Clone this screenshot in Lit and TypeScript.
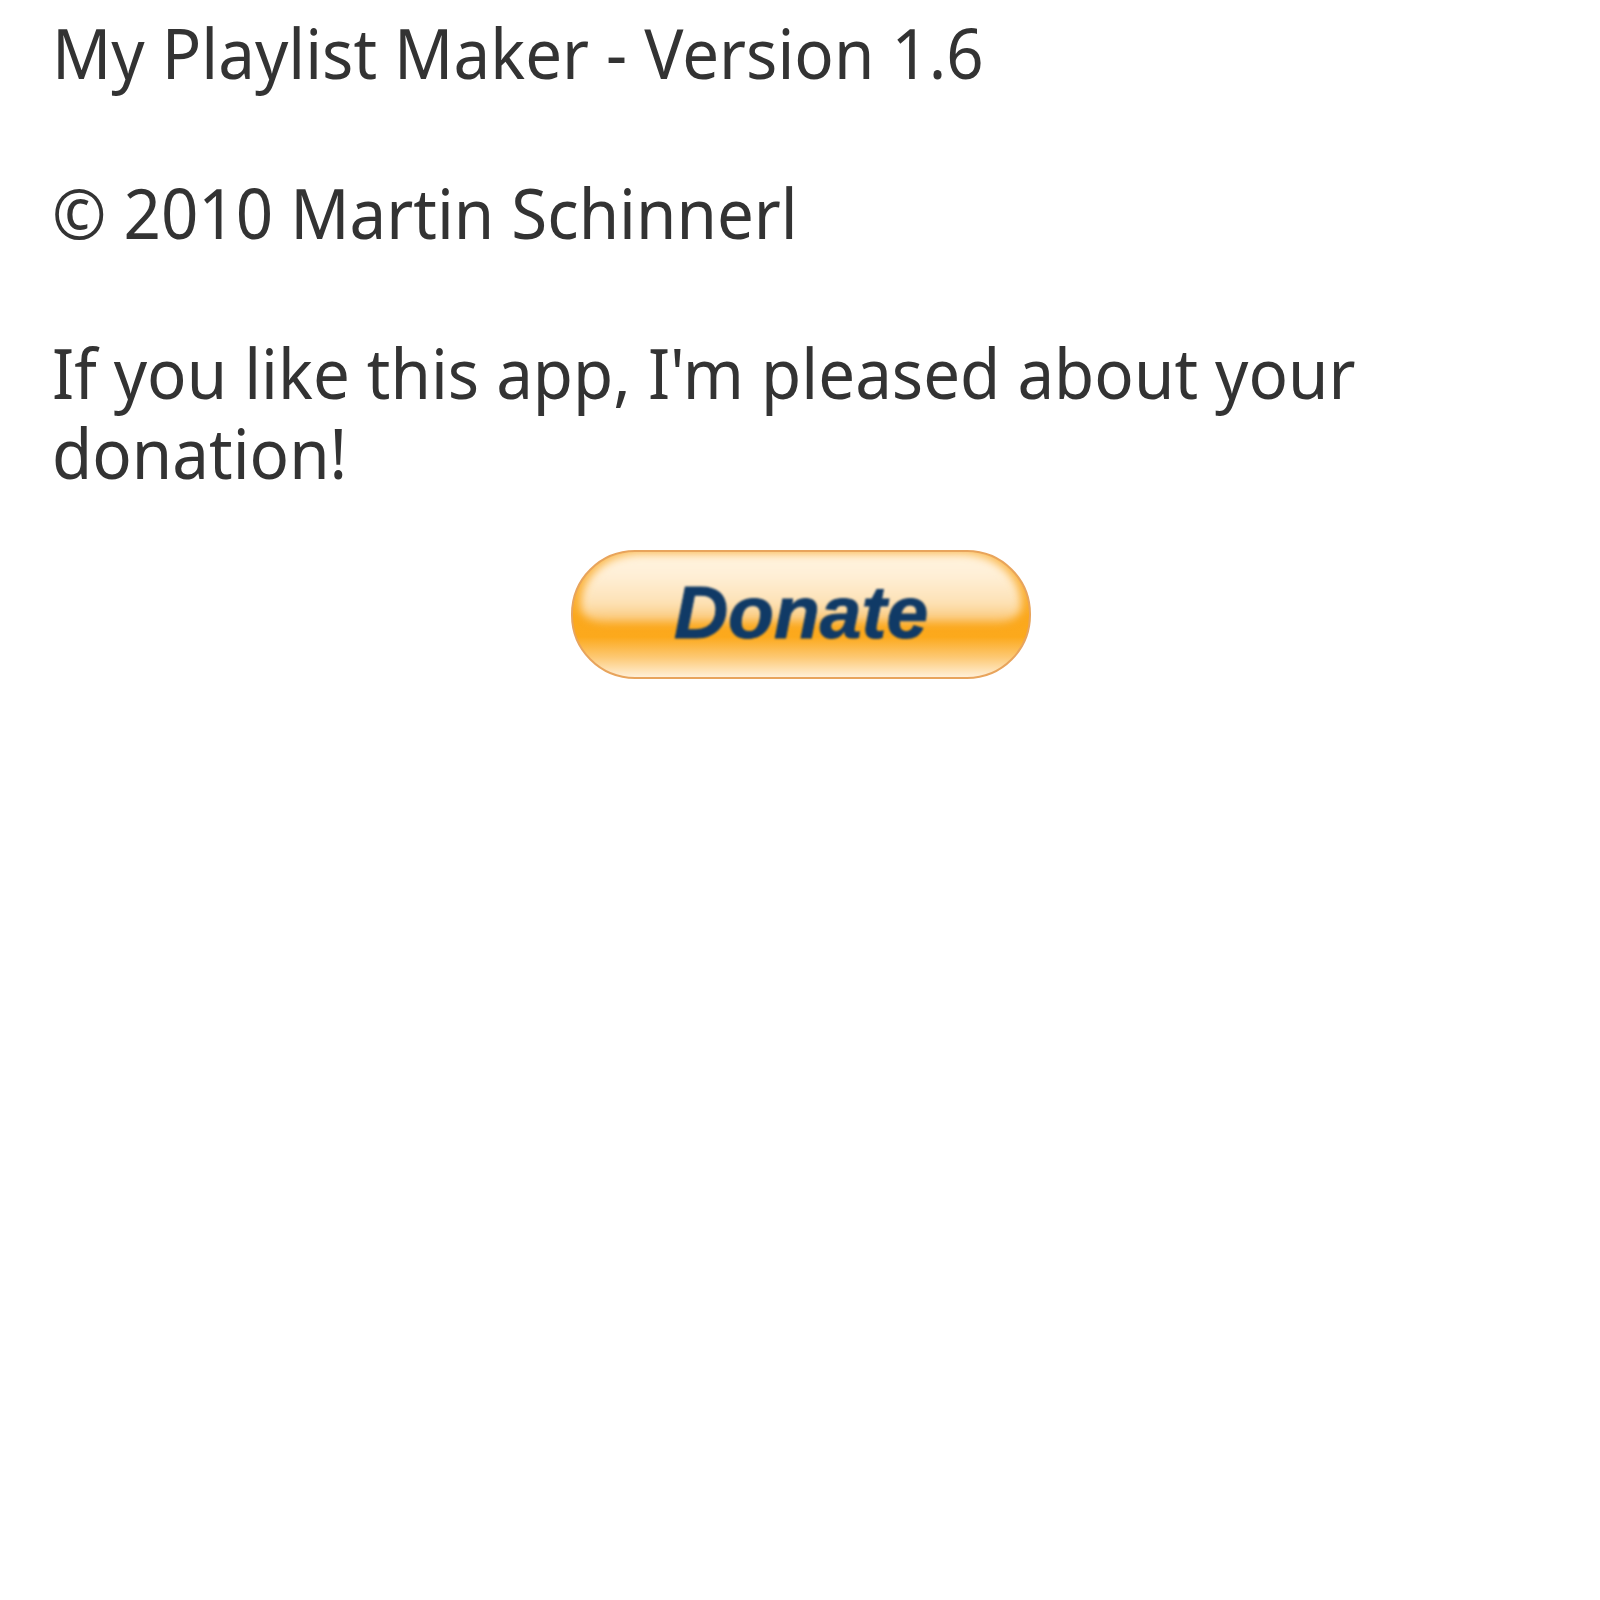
import { LitElement, html, css } from "lit";
import { customElement } from "lit/decorators.js";

@customElement("app-root")
export class AppRoot extends LitElement {
  static styles = css`
    :host { display: block; width: 1600px; height: 1600px; background: #fff; }
    .page {
      box-sizing: border-box; width: 1600px; height: 1600px; padding: 12px 52px 0;
      font-family: "Noto Sans", "Open Sans", sans-serif; font-size: 70px; line-height: 80px;
      color: #333; letter-spacing: 0;
    }
    p { margin: 0 0 80px; width: 1500px; transform: scaleX(0.935); transform-origin: left top; filter: blur(0.7px); }
    p.last { margin: 0; }
    .row { display: flex; margin: 58px 0 0 519px; }
    .btn {
      position: relative; overflow: hidden;
      width: 460px; height: 129px; box-sizing: border-box; border-radius: 64px;
      border: 2px solid #e8a45c;
      background: linear-gradient(180deg, #fbbf5e 0%, #fba81c 52%, #fca91c 68%, #fdc872 84%, #fff0d8 100%);
      display: flex; align-items: center; justify-content: center;
      font-family: "Liberation Sans", Arial, sans-serif; font-weight: 700; font-style: italic;
      font-size: 75px; letter-spacing: 0; color: #103a66;
    }
    .gloss {
      position: absolute; left: 8px; right: 8px; top: 2px; height: 68px;
      border-radius: 60px 60px 24px 24px / 50px 50px 14px 14px;
      background: linear-gradient(180deg, #fff3df 0%, #fff0d8 30%, #fde2b6 72%, #fbc674 100%);
      filter: blur(4px);
    }
    .label {
      position: relative; top: -3px; filter: blur(0.8px);
      -webkit-text-stroke: 1px #103a66;
    }
  `;
  render() {
    return html`<div class="page">
      <p>My Playlist Maker - Version 1.6</p>
      <p>© 2010 Martin Schinnerl</p>
      <p class="last">If you like this app, I'm pleased about your donation!</p>
      <div class="row"><div class="btn"><span class="gloss"></span><span class="label">Donate</span></div></div>
    </div>`;
  }
}
